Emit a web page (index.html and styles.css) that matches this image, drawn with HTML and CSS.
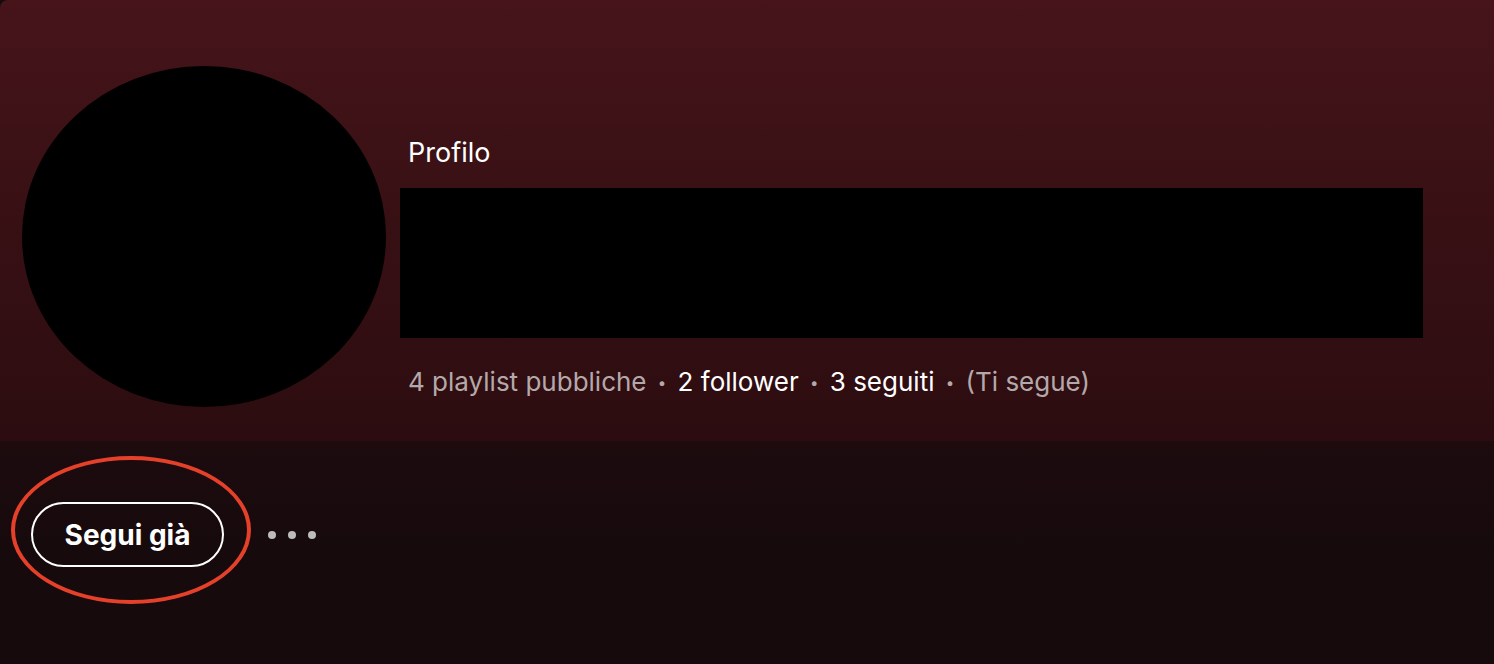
FILE: index.html
```html
<!DOCTYPE html>
<html lang="it">
<head>
<meta charset="utf-8">
<title>Profilo</title>
<link rel="stylesheet" href="styles.css">
</head>
<body>
<div class="page">
  <header class="header">
    <div class="avatar"></div>
    <div class="info">
      <div class="kind">Profilo</div>
      <div class="name-block"></div>
      <div class="stats">
        <span class="muted">4 playlist pubbliche</span>
        <span class="dot">•</span>
        <span class="strong">2 follower</span>
        <span class="dot">•</span>
        <span class="strong">3 seguiti</span>
        <span class="dot">•</span>
        <span class="muted">(Ti segue)</span>
      </div>
    </div>
  </header>
  <section class="actions">
    <div class="follow-wrap">
      <button class="follow">Segui già</button>
      <div class="highlight"></div>
    </div>
    <div class="more">
      <span></span><span></span><span></span>
    </div>
  </section>
</div>
</body>
</html>
```

FILE: styles.css
```css
html, body {
  margin: 0;
  padding: 0;
}
body {
  background: #170a0c;
  font-family: Inter, Lato, "Liberation Sans", sans-serif;
  color: #fff;
}
.page {
  width: 1494px;
  height: 664px;
  overflow: hidden;
  background: linear-gradient(180deg, #1d0b0e 0px, #160a0c 120px, #170a0c 223px);
  background-position: 0 441px;
  background-repeat: no-repeat;
}
.header {
  height: 441px;
  box-sizing: border-box;
  padding: 66px 0 0 22px;
  display: flex;
  gap: 14px;
  background: linear-gradient(180deg, #46141a 0%, #3a1115 40%, #2c0c10 100%);
  border-top-left-radius: 8px;
}
.avatar {
  width: 364px;
  height: 341px;
  border-radius: 50%;
  background: #000;
  flex: none;
}
.info {
  display: flex;
  flex-direction: column;
  padding-top: 71px;
}
.kind {
  font-size: 27px;
  line-height: 32px;
  padding-left: 8px;
  font-weight: 400;
}
.name-block {
  margin-top: 19px;
  width: 1023px;
  height: 150px;
  background: #000;
}
.stats {
  margin-top: 28px;
  padding-left: 8px;
  font-size: 26px;
  line-height: 32px;
  white-space: nowrap;
}
.stats .muted {
  color: #b4a9aa;
}
.stats .strong {
  color: #fff;
}
.stats .dot {
  color: #b4a9aa;
  font-size: 15px;
  margin: 0 4px;
  position: relative;
  top: -3px;
}
.actions {
  display: flex;
  align-items: center;
  gap: 44px;
  padding: 61px 0 0 31px;
}
.follow-wrap {
  position: relative;
}
.follow {
  width: 193px;
  height: 65px;
  box-sizing: border-box;
  border: 2px solid #fff;
  border-radius: 33px;
  background: transparent;
  color: #fff;
  font-family: Inter, Lato, "Liberation Sans", sans-serif;
  font-weight: 700;
  font-size: 28px;
  cursor: pointer;
  display: block;
  padding: 0;
}
.highlight {
  position: absolute;
  left: -20px;
  top: -46px;
  width: 240px;
  height: 148px;
  box-sizing: border-box;
  border: 4px solid #e5402a;
  border-radius: 50%;
  pointer-events: none;
}
.more {
  display: flex;
  gap: 12px;
}
.more span {
  width: 8px;
  height: 8px;
  border-radius: 50%;
  background: #bdbbbb;
}
```
